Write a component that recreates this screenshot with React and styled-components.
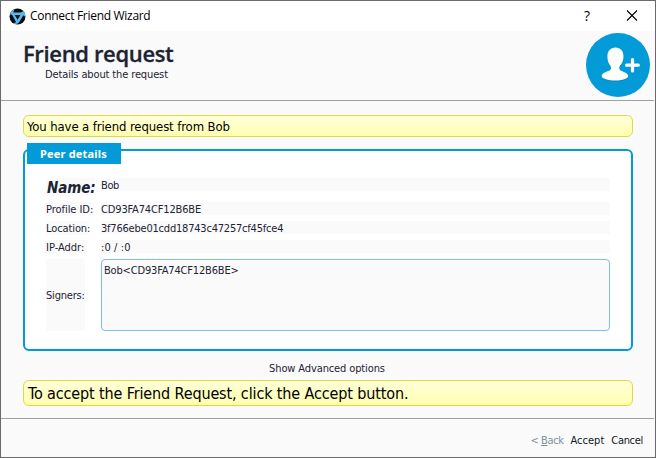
import React from "react";
import styled, { createGlobalStyle } from "styled-components";

const Global = createGlobalStyle`
  * { box-sizing: border-box; }
  body { margin: 0; background: #fafafa; }
`;

const Window = styled.div`
  width: 656px;
  height: 458px;
  border: 1px solid #6b696b;
  background: #fafafa;
  color: #1c2333;
  font: 11px/13px "DejaVu Sans Condensed", "DejaVu Sans", sans-serif;
  font-stretch: condensed;
  display: flex;
  flex-direction: column;
  overflow: hidden;
  white-space: nowrap;
`;

const Text = styled.span`
  letter-spacing: ${(p) => p.$track || 0}px;
`;

const TitleBar = styled.header`
  height: 30px;
  flex: none;
  display: flex;
  align-items: center;
  padding: 0 17px 0 8px;
  background: #fff;
  color: #000;
  font: 12px/16px "Open Sans", sans-serif;
`;

const Title = styled(Text)`
  margin-left: 4px;
  flex: 1;
`;

const Help = styled.span`
  font-size: 14px;
  margin-right: 36px;
`;

const Header = styled.section`
  height: 70px;
  flex: none;
  display: flex;
  justify-content: space-between;
  padding: 2px 4px 0 22px;
  border-bottom: 1px solid #a0a0a0;
  margin-right: 1px;
`;

const Heading = styled.h1`
  margin: 6px 0 0;
  font: 600 22px/28px "Open Sans", sans-serif;
  -webkit-text-stroke: 0.3px currentColor;
  letter-spacing: ${(p) => p.$track}px;
`;

const Subtitle = styled.p`
  margin: 1px 0 0 22px;
  letter-spacing: ${(p) => p.$track}px;
`;

const Body = styled.main`
  height: 318px;
  flex: none;
  padding: 14px 21px 0 22px;
  margin-right: 1px;
  border-bottom: 1px solid #a0a0a0;
`;

const Callout = styled.div`
  height: ${(p) => (p.$large ? 26 : 22)}px;
  display: flex;
  align-items: center;
  padding: 0 ${(p) => (p.$large ? 4 : 3)}px;
  border: 1px solid #dcdc40;
  border-radius: 6px;
  background: linear-gradient(#ffffd8, #ffffb0);
  color: #000;
  font-size: ${(p) => (p.$large ? 16 : 13)}px;
`;

const Group = styled.section`
  height: 202px;
  margin-top: 12px;
  border: 2px solid #039bd7;
  border-radius: 6px;
  background: #fff;
  padding: 0 21px;
`;

const GroupTitle = styled.h2`
  width: 94px;
  height: 21px;
  margin: -8px 0 14px -19px;
  background: #039bd7;
  color: #fff;
  font: 700 11px/21px "Noto Sans", sans-serif;
  padding-left: 13px;
  letter-spacing: ${(p) => p.$track}px;
`;

const Row = styled.div`
  display: grid;
  grid-template-columns: 55px 509px;
  height: ${(p) => p.$h}px;
  margin-bottom: 6px;
`;

const Label = styled.div`
  justify-self: start;
  width: ${(p) => p.$w}px;
  height: 100%;
  background: #fafafa;
  display: flex;
  align-items: center;
  padding-top: 1px;
`;

const NameLabel = styled(Label)`
  font-size: 15px;
  font-style: italic;
  font-weight: 700;
  padding: 2px 0 0 1px;
`;

const Value = styled.div`
  height: 13px;
  line-height: 15px;
  background: #fafafa;
`;

const SignerBox = styled.div`
  height: 72px;
  border: 1px solid #78bfef;
  border-radius: 4px;
  background: #fafafa;
  padding: 4px 2px;
`;

const Advanced = styled.div`
  margin: 11px 0 5px;
  height: 13px;
  text-align: center;
  padding-right: 2px;
`;

const Footer = styled.footer`
  display: flex;
  justify-content: flex-end;
  align-items: center;
  gap: 7px;
  flex: 1;
  padding: 5px 12px 0 0;
`;

const Button = styled.button`
  all: unset;
  letter-spacing: ${(p) => p.$track}px;
  color: ${(p) => (p.disabled ? "#7f909c" : "#101826")};
`;

const AppIcon = () => (
  <svg width="17" height="17" viewBox="0 0 17 17">
    <circle cx="8.500" cy="8.500" r="8" fill="#060c12" />
    <g fill="#5db9e6">
      <path d="M1 6.800C1.500 3.800 3 1.900 6 .9 4.300 2.700 4.300 4.300 5.200 6L9.300 13l-2 1.400L3.500 7.500C2.800 6.300 1.900 6.200 1 6.800Z" />
      <path d="M4.500 4.500h6.700c1.700 0 2.600-.7 3-2 1.700 1.800 2.300 4 2 6.800-.8-1.700-1.900-2.400-3.700-2.400H5.200Z" />
      <path d="M12.200 5.500 14.500 7l-3.700 6.300c-1.500 2.500-4 3.500-7.300 1.600 2.200.2 3.500-.4 4.500-2.100Z" />
    </g>
    <path d="M6.400 7h4.400l-2.200 3.900Z" fill="#0b1d2b" />
  </svg>
);

const CloseIcon = () => (
  <svg width="12" height="12" viewBox="0 0 12 12">
    <path d="m1 .5 10 10M11 .5 1 10.500" stroke="#000" strokeWidth="1.100" />
  </svg>
);

const AddFriendIcon = () => (
  <svg width="64" height="64" viewBox="0 0 64 64">
    <circle cx="32" cy="32" r="32" fill="#039bd7" />
    <path
      d="M29.500 15.500c5 0 8 3.500 8 9 0 4-1.400 7-3.600 9.300-.8.900-.9 3.500.3 4.400 2.300 1.600 8 2.300 8 6 0 2-6 4.300-13 4.300s-13.500-2-13.500-4.300c0-3.700 6-4.500 8.300-6 1.300-.9 1.200-3.500.4-4.400-2-2.300-3-5.300-3-9.300 0-5.500 3-9 8.100-9Z"
      fill="#0778a8"
      opacity=".55"
    />
    <path
      d="M29.500 14.500c5 0 8 3.500 8 9 0 4-1.400 7-3.600 9.300-.8.900-.9 3.500.3 4.400 2.300 1.600 8 2.300 8 6 0 2.300-6 4.300-13 4.300s-13.500-2-13.500-4.300c0-3.700 6-4.500 8.300-6 1.300-.9 1.200-3.500.4-4.400-2-2.300-3-5.300-3-9.300 0-5.500 3-9 8.100-9Z"
      fill="#fff"
    />
    <path d="M46.500 26.500v11.500M40.700 32.200h11.600" stroke="#fff" strokeWidth="3.200" strokeLinecap="round" />
  </svg>
);

export default function App() {
  return (
    <>
      <Global />
      <Window>
        <TitleBar>
          <AppIcon />
          <Title $track={-0.3}>Connect Friend Wizard</Title>
          <Help>?</Help>
          <CloseIcon />
        </TitleBar>
        <Header>
          <div>
            <Heading $track={-0.35}>Friend request</Heading>
            <Subtitle $track={-0.13}>Details about the request</Subtitle>
          </div>
          <AddFriendIcon />
        </Header>
        <Body>
          <Callout>
            <Text $track={-0.11}>You have a friend request from Bob</Text>
          </Callout>
          <Group>
            <GroupTitle $track={0.18}>Peer details</GroupTitle>
            <Row $h={18}>
              <NameLabel $w={49}><Text $track={-0.1}>Name:</Text></NameLabel>
              <Value><Text $track={-0.4}>Bob</Text></Value>
            </Row>
            <Row $h={13}>
              <Label $w={47}><Text $track={-0.05}>Profile ID:</Text></Label>
              <Value><Text $track={-0.15}>CD93FA74CF12B6BE</Text></Value>
            </Row>
            <Row $h={13}>
              <Label $w={43}><Text $track={-0.1}>Location:</Text></Label>
              <Value><Text $track={-0.21}>3f766ebe01cdd18743c47257cf45fce4</Text></Value>
            </Row>
            <Row $h={13}>
              <Label $w={41}><Text>IP-Addr:</Text></Label>
              <Value><Text $track={0.1}>:0 / :0</Text></Value>
            </Row>
            <Row $h={72}>
              <Label $w={39}><Text $track={-0.2}>Signers:</Text></Label>
              <SignerBox><Text $track={-0.17}>Bob&lt;CD93FA74CF12B6BE&gt;</Text></SignerBox>
            </Row>
          </Group>
          <Advanced><Text $track={-0.12}>Show Advanced options</Text></Advanced>
          <Callout $large>
            <Text $track={-0.13}>To accept the Friend Request, click the Accept button.</Text>
          </Callout>
        </Body>
        <Footer>
          <Button disabled $track={-0.4}>&lt; <u>B</u>ack</Button>
          <Button $track={0}>Accept</Button>
          <Button $track={-0.3}>Cancel</Button>
        </Footer>
      </Window>
    </>
  );
}
